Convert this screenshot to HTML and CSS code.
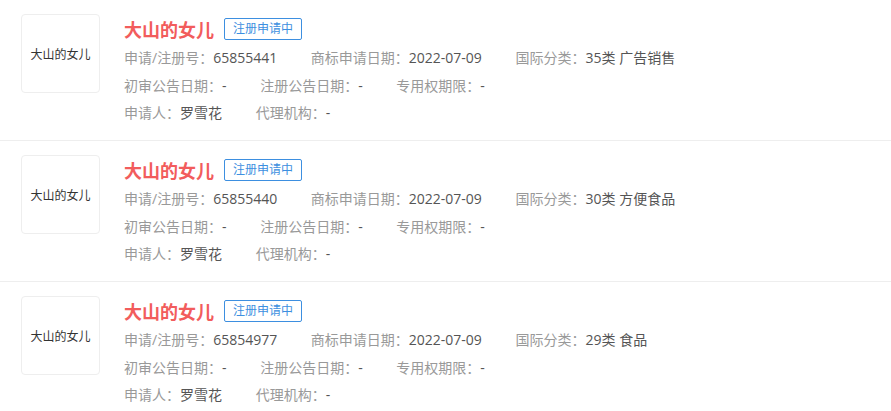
FILE: index.html
```html
<!DOCTYPE html>
<html lang="zh-CN">
<head>
    <meta charset="UTF-8">
    <meta name="viewport" content="width=device-width, initial-scale=1.0">
    <title>商标列表</title>
    <link rel="stylesheet" href="styles.css">
</head>
<body>
    <div class="list">
        <div class="item">
            <div class="logo">大山的女儿</div>
            <div class="info">
                <div class="title-row">
                    <span class="name">大山的女儿</span>
                    <span class="badge">注册申请中</span>
                </div>
                <div class="row">
                    <span class="field">申请/注册号：<em>65855441</em></span>
                    <span class="field">商标申请日期：<em>2022-07-09</em></span>
                    <span class="field">国际分类：<em>35类 广告销售</em></span>
                </div>
                <div class="row">
                    <span class="field">初审公告日期：<em>-</em></span>
                    <span class="field">注册公告日期：<em>-</em></span>
                    <span class="field">专用权期限：<em>-</em></span>
                </div>
                <div class="row">
                    <span class="field">申请人：<em>罗雪花</em></span>
                    <span class="field">代理机构：<em>-</em></span>
                </div>
            </div>
        </div>

        <div class="item">
            <div class="logo">大山的女儿</div>
            <div class="info">
                <div class="title-row">
                    <span class="name">大山的女儿</span>
                    <span class="badge">注册申请中</span>
                </div>
                <div class="row">
                    <span class="field">申请/注册号：<em>65855440</em></span>
                    <span class="field">商标申请日期：<em>2022-07-09</em></span>
                    <span class="field">国际分类：<em>30类 方便食品</em></span>
                </div>
                <div class="row">
                    <span class="field">初审公告日期：<em>-</em></span>
                    <span class="field">注册公告日期：<em>-</em></span>
                    <span class="field">专用权期限：<em>-</em></span>
                </div>
                <div class="row">
                    <span class="field">申请人：<em>罗雪花</em></span>
                    <span class="field">代理机构：<em>-</em></span>
                </div>
            </div>
        </div>

        <div class="item">
            <div class="logo">大山的女儿</div>
            <div class="info">
                <div class="title-row">
                    <span class="name">大山的女儿</span>
                    <span class="badge">注册申请中</span>
                </div>
                <div class="row">
                    <span class="field">申请/注册号：<em>65854977</em></span>
                    <span class="field">商标申请日期：<em>2022-07-09</em></span>
                    <span class="field">国际分类：<em>29类 食品</em></span>
                </div>
                <div class="row">
                    <span class="field">初审公告日期：<em>-</em></span>
                    <span class="field">注册公告日期：<em>-</em></span>
                    <span class="field">专用权期限：<em>-</em></span>
                </div>
                <div class="row">
                    <span class="field">申请人：<em>罗雪花</em></span>
                    <span class="field">代理机构：<em>-</em></span>
                </div>
            </div>
        </div>
    </div>
</body>
</html>
```

FILE: styles.css
```css
body {
    margin: 0;
    font-family: "Open Sans", "Noto Sans CJK TC", sans-serif;
    background-color: white;
    color: #333;
}

.item {
    display: flex;
    height: 141px;
    padding: 14px 0 0 21px;
    box-sizing: border-box;
    border-bottom: 1px solid #eee;
}

.logo {
    width: 79px;
    height: 79px;
    box-sizing: border-box;
    border: 1px solid #eee;
    border-radius: 4px;
    display: flex;
    align-items: center;
    justify-content: center;
    font-size: 12px;
    color: #333;
    flex-shrink: 0;
}

.info {
    margin-left: 24px;
}

.title-row {
    display: flex;
    align-items: center;
    height: 30px;
}

.name {
    font-size: 18px;
    font-weight: bold;
    color: #f25c5c;
}

.badge {
    margin-left: 10px;
    height: 22px;
    padding: 0 8px;
    box-sizing: border-box;
    border: 1px solid #3d8fe0;
    border-radius: 2px;
    color: #3d8fe0;
    font-size: 12px;
    line-height: 20px;
}

.row {
    font-size: 14px;
    line-height: 27.5px;
    color: #999;
    white-space: nowrap;
}

.row:first-of-type {
    margin-top: 1px;
}

.field {
    margin-right: 30px;
}

.field em {
    font-style: normal;
    color: #555;
}
```
